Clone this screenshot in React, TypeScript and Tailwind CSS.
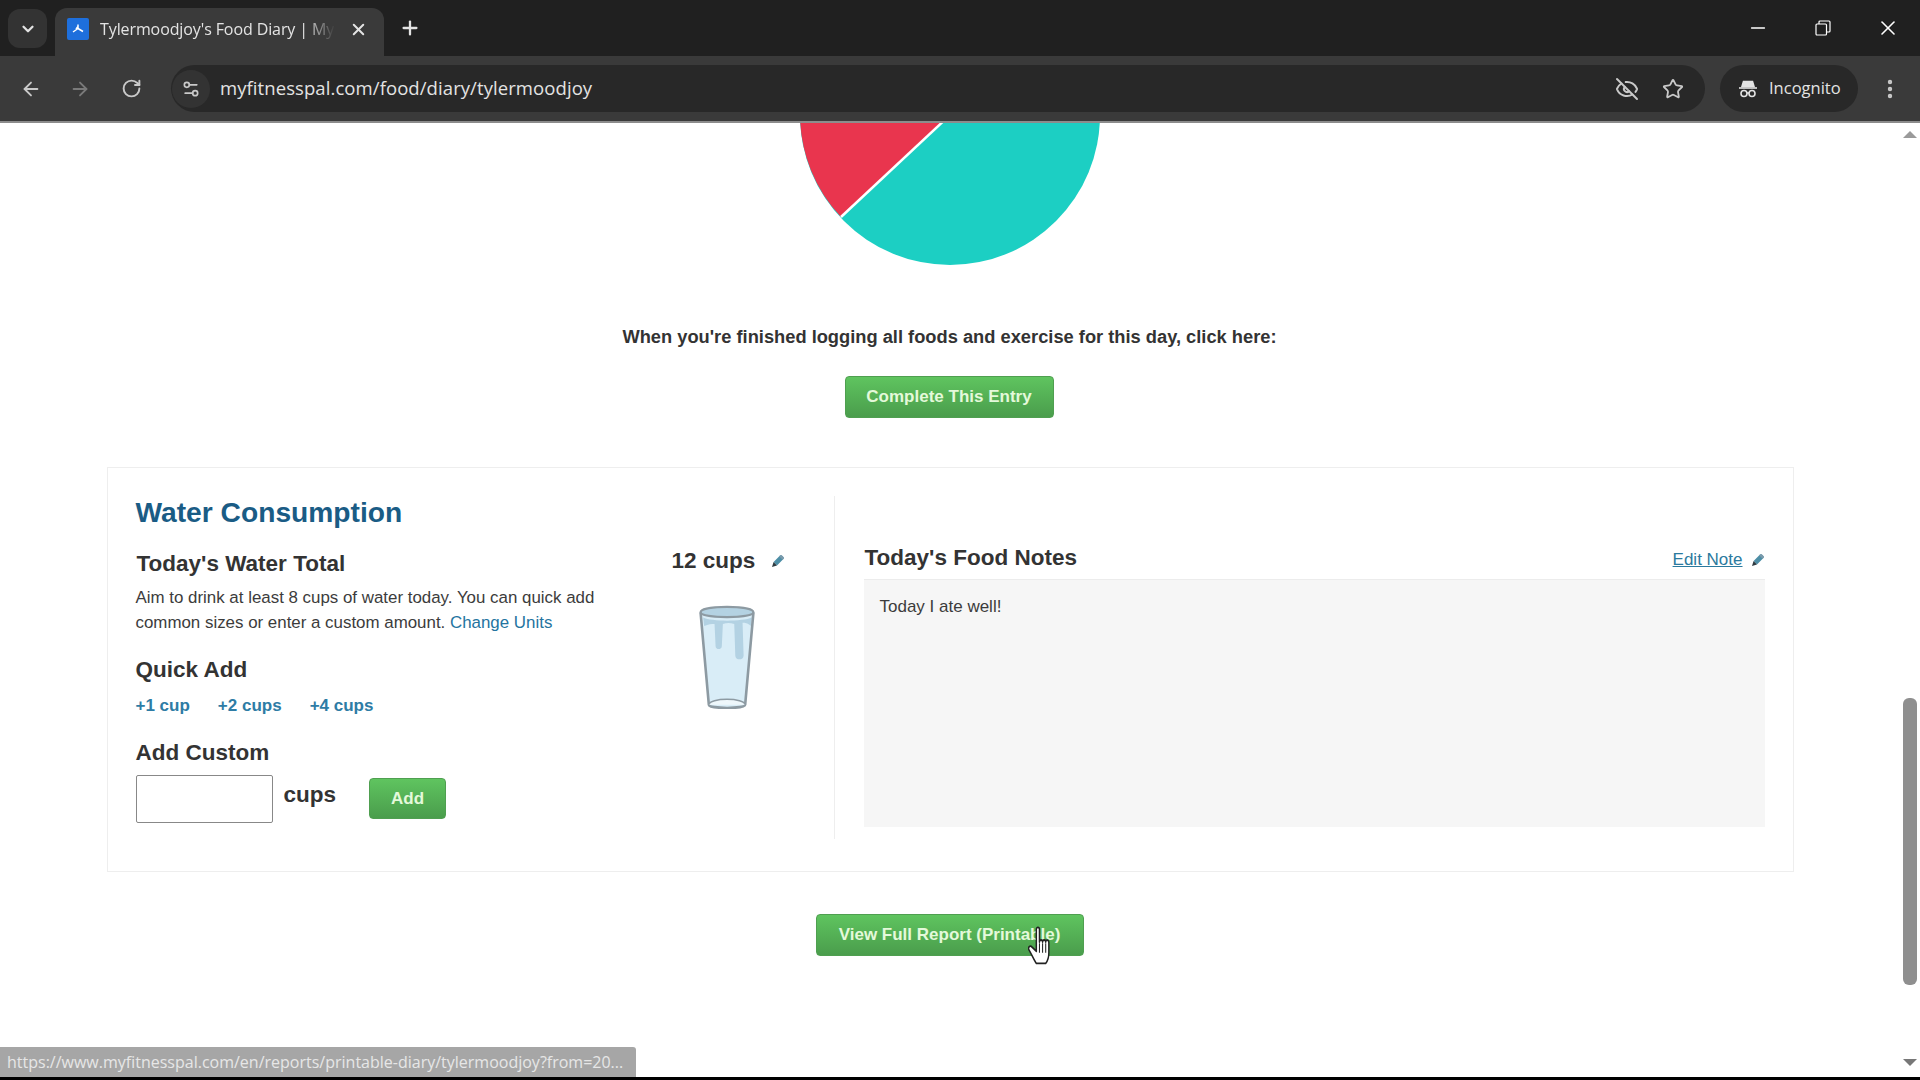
import { ArrowLeft, ArrowRight, RotateCw, X, Plus, ChevronDown, EyeOff, Star, EllipsisVertical, Minus, Settings2 } from "lucide-react";

function Pencil({ className }: { className?: string }) {
  return (
    <svg viewBox="0 0 14 14" className={className}>
      <path d="M2.600 8 9 1.600c.6-.6 1.300-.6 1.900 0l1.500 1.500c.6.6.6 1.300 0 1.900L6 11.400z" fill="#4d8ea6" />
      <path d="M8.800 1.800c.7-.7 1.400-.7 2.100-.2l1.500 1.500c.6.6.6 1.300 0 1.900l-.8.8-3.600-3.600z" fill="#7c9aab" />
      <path d="M2.600 8 6 11.400 1 13z" fill="#2f3a40" />
    </svg>
  );
}

function Glass() {
  return (
    <svg viewBox="0 0 54 99" preserveAspectRatio="none" className="w-[56px] h-[104px]">
      <path d="M1.500 7 9.500 95c.3 4 35 4 35 0L52.500 7z" fill="#d9edf7" />
      <path d="M1.500 7c0-7 51-7 51 0 0 6-51 6-51 0z" fill="#b4d2e2" />
      <path d="M4 12c8 4 38 4 47 0l-1 8c-4-3-5-3-8-3l1 31c0 5-8 5-8 0l-1-30c-4-1-7-1-11 0l-1 21c0 4-6 4-6 0l-1-21c-3 0-6 0-10 2z" fill="#a9cbdd" opacity="0.8" />
      <path d="M1.500 7 9.500 95c.3 4 35 4 35 0L52.500 7" fill="none" stroke="#8d9aa2" strokeWidth="2.500" />
      <path d="M1.500 7c0-7 51-7 51 0 0 6-51 6-51 0z" fill="none" stroke="#8d9aa2" strokeWidth="2" />
      <path d="M9.500 95c0-7 35-7 35 0" fill="#eef7fb" stroke="#8d9aa2" strokeWidth="1.500" />
    </svg>
  );
}

function GreenButton({ label, className }: { label: string; className: string }) {
  return (
    <button className={`rounded-[4px] border border-[#4f9f50] bg-gradient-to-b from-[#5fc45f] to-[#4a9d4c] text-[#e4f9da] font-bold text-[17px] font-['Liberation_Sans',Arial,sans-serif] ${className}`}>
      {label}
    </button>
  );
}

export default function App() {
  return (
    <div className="w-[1920px] h-[1080px] overflow-hidden flex flex-col bg-white font-['Liberation_Sans',Arial,sans-serif] relative">
      {/* Tab strip */}
      <div className="h-14 bg-[#202020] flex items-end text-[#e3e3e3] shrink-0">
        <div className="ml-2 mb-[8px] w-[39px] h-[39px] rounded-xl bg-[#333333] flex items-center justify-center">
          <ChevronDown size={18} strokeWidth={3} />
        </div>
        <div className="ml-2 w-[329px] h-12 bg-[#3a3a3a] rounded-t-xl flex items-center pl-3 pr-4 pb-[6px]">
          <div className="w-[22px] h-[22px] bg-[#1e6fdc] rounded-[2px] flex items-center justify-center shrink-0">
            <svg viewBox="0 0 16 16" className="w-4 h-4">
              <path d="M8 3.500v4M8 7.500 3 11M8 7.500l5 3M8 5.500 6 8" stroke="#fff" strokeWidth="1.500" fill="none" />
            </svg>
          </div>
          <span className="ml-[11px] w-[235px] overflow-hidden whitespace-nowrap text-[16px] font-['Open_Sans',sans-serif] tracking-[-0.1px] [mask-image:linear-gradient(to_right,black_87%,transparent)]">Tylermoodjoy's Food Diary | My</span>
          <X size={19} strokeWidth={2.500} className="ml-auto" />
        </div>
        <Plus size={22} strokeWidth={2.500} className="ml-[15px] mb-[17px]" />
        <div className="ml-auto flex items-center h-14 pr-[20px] text-white">
          <Minus size={22} strokeWidth={1.500} />
          <svg viewBox="0 0 16 16" className="w-[16px] h-[16px] ml-[46px]" fill="none" stroke="#fff" strokeWidth="1.200">
            <rect x="1" y="4" width="10.500" height="11" rx="1" />
            <path d="M4 4V2a1 1 0 0 1 1-1h9a1 1 0 0 1 1 1v9a1 1 0 0 1-1 1h-2.500" />
          </svg>
          <X size={24} strokeWidth={1.600} className="ml-[45px]" />
        </div>
      </div>
      {/* Toolbar */}
      <div className="h-[67px] bg-[#3a3a3a] border-b-2 border-[#8c8c8c] flex items-center text-[#c9c9c9] shrink-0">
        <ArrowLeft size={22} strokeWidth={2} className="ml-5" />
        <ArrowRight size={22} strokeWidth={2} className="ml-[27px] text-[#7a7a7a]" />
        <RotateCw size={21} strokeWidth={2.200} className="ml-[30px]" />
        <div className="ml-[29px] w-[1534px] h-[47px] rounded-full bg-[#282828] flex items-center">
          <div className="ml-[1px] w-[38px] h-[38px] rounded-full bg-[#333333] flex items-center justify-center">
            <Settings2 size={20} strokeWidth={2} />
          </div>
          <span className="ml-[10px] mb-[1px] text-[18.500px] text-[#e3e3e3] font-['Open_Sans',sans-serif] tracking-[0.08px]">myfitnesspal.com/food/diary/tylermoodjoy</span>
          <EyeOff size={24} strokeWidth={2} className="ml-auto" />
          <Star size={22} strokeWidth={2} className="ml-[23px] mr-[21px]" />
        </div>
        <div className="ml-[15px] w-[138px] h-[47px] rounded-full bg-[#282828] flex items-center pl-[18px] text-[#e3e3e3]">
          <svg viewBox="0 0 20 20" className="w-5 h-5" fill="none" stroke="currentColor" strokeWidth="1.600">
            <path d="M5.500 2.500h9l1.500 5h-12z" fill="currentColor" />
            <path d="M1 9h18" />
            <circle cx="6" cy="14.500" r="3" />
            <circle cx="14" cy="14.500" r="3" />
            <path d="M9 14h2" />
          </svg>
          <span className="ml-[11px] text-[16.500px] font-['Open_Sans',sans-serif]">Incognito</span>
        </div>
        <EllipsisVertical size={24} strokeWidth={2.400} className="ml-[20px]" />
      </div>
      {/* Page */}
      <div className="flex-1 flex min-h-0">
        <div className="flex-1 flex flex-col items-center min-w-0 text-[#333333]">
          <svg viewBox="800 123 300 143" className="w-[300px] h-[143px] shrink-0">
            <circle cx="950" cy="115" r="150" fill="#1ccfc3" />
            <path d="M950 115 841 217A150 150 0 0 1 800 115z" fill="#e9354e" />
            <path d="M950 115 841 217" stroke="#fff" strokeWidth="2.500" />
          </svg>
          <p className="mt-[59px] mr-[1px] text-[18.300px] leading-6 font-bold">When you're finished logging all foods and exercise for this day, click here:</p>
          <GreenButton label="Complete This Entry" className="mt-[27px] mr-[2px] w-[209px] h-[42px]" />
          {/* Card */}
          <div className="mt-[49px] w-[1687px] h-[405px] border border-[#eeeeee] pt-[28px] pb-[32px] flex shrink-0">
            <div className="w-[727px] pl-[28px] border-r border-[#eeeeee] flex">
              <div className="w-[536px]">
                <h2 className="text-[28.200px] leading-8 font-bold text-[#1a5c85]">Water Consumption</h2>
                <h3 className="mt-[22px] text-[22.500px] leading-7 font-bold pl-[1px]">Today's Water Total</h3>
                <p className="mt-[7px] text-[16.900px] leading-[25px] text-[#3c3c3c] w-[480px]">
                  Aim to drink at least 8 cups of water today. You can quick add common sizes or enter a custom amount. <span className="text-[#24749f]">Change Units</span>
                </p>
                <h3 className="mt-[21px] text-[22.500px] leading-7 font-bold">Quick Add</h3>
                <div className="mt-[10px] flex gap-[28px] text-[17px] leading-6 font-bold text-[#2e7ca5]">
                  <span>+1 cup</span>
                  <span>+2 cups</span>
                  <span>+4 cups</span>
                </div>
                <h3 className="mt-[21px] text-[22.500px] leading-7 font-bold">Add Custom</h3>
                <div className="mt-2 flex items-start">
                  <div className="w-[137px] h-[48px] border border-[#888888] rounded-[2px]" />
                  <span className="ml-[11px] mt-[6px] text-[22.500px] leading-7 font-bold">cups</span>
                  <GreenButton label="Add" className="ml-[33px] mt-[3px] w-[77px] h-[41px]" />
                </div>
              </div>
              <div className="flex flex-col items-start">
                <div className="flex items-center mt-[51px]">
                  <span className="text-[22.500px] leading-7 font-bold">12 cups</span>
                  <Pencil className="ml-[16px] w-[14px] h-[14px]" />
                </div>
                <div className="mt-[30px] ml-[27px]"><Glass /></div>
              </div>
            </div>
            <div className="ml-[29px] w-[901px] flex flex-col">
              <div className="flex items-end h-[83px] pb-[7px]">
                <h3 className="ml-[1px] text-[22.500px] leading-7 font-bold">Today's Food Notes</h3>
                <span className="ml-auto text-[17px] leading-6 underline text-[#2b7a9e]">Edit Note</span>
                <Pencil className="ml-[8px] mb-[5px] w-[14px] h-[14px]" />
              </div>
              <div className="h-[248px] bg-[#f6f6f6] border-t border-[#ececec] pl-[16px] pt-[15px] text-[17px] leading-6 text-[#3c3c3c]">Today I ate well!</div>
            </div>
          </div>
          <GreenButton label="View Full Report (Printable)" className="mt-[42px] mr-[1px] w-[268px] h-[42px] shrink-0" />
        </div>
        {/* Scrollbar */}
        <div className="w-5 shrink-0 flex flex-col items-center relative">
          <div className="mt-[8px] w-0 h-0 border-x-[7px] border-x-transparent border-b-[7px] border-b-[#9a9a9a]" />
          <div className="mt-[560px] w-[14px] h-[287px] bg-[#8f8f8f] rounded-[6px]" />
          <div className="mt-[74px] w-0 h-0 border-x-[7px] border-x-transparent border-t-[7px] border-t-[#777777]" />
        </div>
      </div>
      <div className="h-[3px] bg-black shrink-0" />
      {/* Status bubble */}
      <div className="absolute left-0 bottom-[3px] w-[636px] h-[30px] bg-[#a6a6a6] rounded-tr-[3px] pl-[7px] text-[16px] leading-[30px] text-[#e6e6e6] whitespace-nowrap font-['Open_Sans',sans-serif] overflow-hidden">https://www.myfitnesspal.com/en/reports/printable-diary/tylermoodjoy?from=20...</div>
      {/* Cursor */}
      <svg viewBox="0 0 24 30" preserveAspectRatio="none" className="absolute left-[1028px] top-[926px] w-[25px] h-[40px]">
        <path d="M8 2.500c0-2 3-2 3 0V12c0-2 3-2 3 0 0-2 3-2 3 0 0-2 3-2 3 .5V20c0 4-2 7-3 8H8c-2-2-4-6-7-10-1.500-2 1-4 3-2l4 3z" fill="#fff" stroke="#222" strokeWidth="1.400" strokeLinejoin="round" />
        <path d="M11 13v7M14 13v7M17 13v7" stroke="#222" strokeWidth="1" />
      </svg>
    </div>
  );
}
